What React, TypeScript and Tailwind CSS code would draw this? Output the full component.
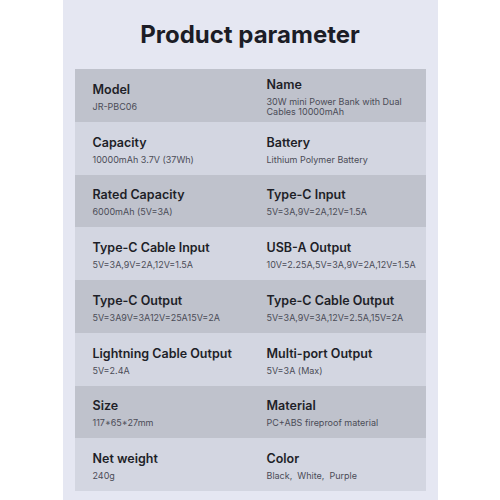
const rows: [string, string[], string, string[]][] = [
  ["Model", ["JR-PBC06"], "Name", ["30W mini Power Bank with Dual", "Cables 10000mAh"]],
  ["Capacity", ["10000mAh 3.7V (37Wh)"], "Battery", ["Lithium Polymer Battery"]],
  ["Rated Capacity", ["6000mAh (5V=3A)"], "Type-C Input", ["5V=3A,9V=2A,12V=1.5A"]],
  ["Type-C Cable Input", ["5V=3A,9V=2A,12V=1.5A"], "USB-A Output", ["10V=2.25A,5V=3A,9V=2A,12V=1.5A"]],
  ["Type-C Output", ["5V=3A9V=3A12V=25A15V=2A"], "Type-C Cable Output", ["5V=3A,9V=3A,12V=2.5A,15V=2A"]],
  ["Lightning Cable Output", ["5V=2.4A"], "Multi-port Output", ["5V=3A (Max)"]],
  ["Size", ["117*65*27mm"], "Material", ["PC+ABS fireproof material"]],
  ["Net weight", ["240g"], "Color", ["Black,  White,  Purple"]],
];

function Cell({ label, value }: { label: string; value: string[] }) {
  return (
    <div className="flex flex-col justify-center pt-[3px]">
      <p className="text-[12.5px] leading-[16px] font-semibold text-[#1e1f28]">{label}</p>
      <div className="mt-[4px] text-[9px] leading-[10px] text-[#4b4c57] whitespace-pre">
        {value.map((v) => (
          <p key={v}>{v}</p>
        ))}
      </div>
    </div>
  );
}

export default function App() {
  return (
    <div
      className="w-[500px] h-[500px] bg-white flex justify-center"
      style={{ fontFamily: "Inter, 'Open Sans', sans-serif" }}
    >
      <div className="w-[375px] h-full bg-[#e5e7f2] pt-[20px] px-[12px]">
        <h1 className="text-center text-[24px] leading-[30px] font-bold text-[#1c1d26]">
          Product parameter
        </h1>
        <div className="mt-[19px]">
          {rows.map(([l1, v1, l2, v2], i) => (
            <div
              key={l1}
              className={
                "grid grid-cols-[174px_1fr] h-[52.75px] pl-[18px] " +
                (i % 2 === 0 ? "bg-[#bfc2cc]" : "bg-[#d3d6e1]")
              }
            >
              <Cell label={l1} value={v1} />
              <Cell label={l2} value={v2} />
            </div>
          ))}
        </div>
      </div>
    </div>
  );
}
